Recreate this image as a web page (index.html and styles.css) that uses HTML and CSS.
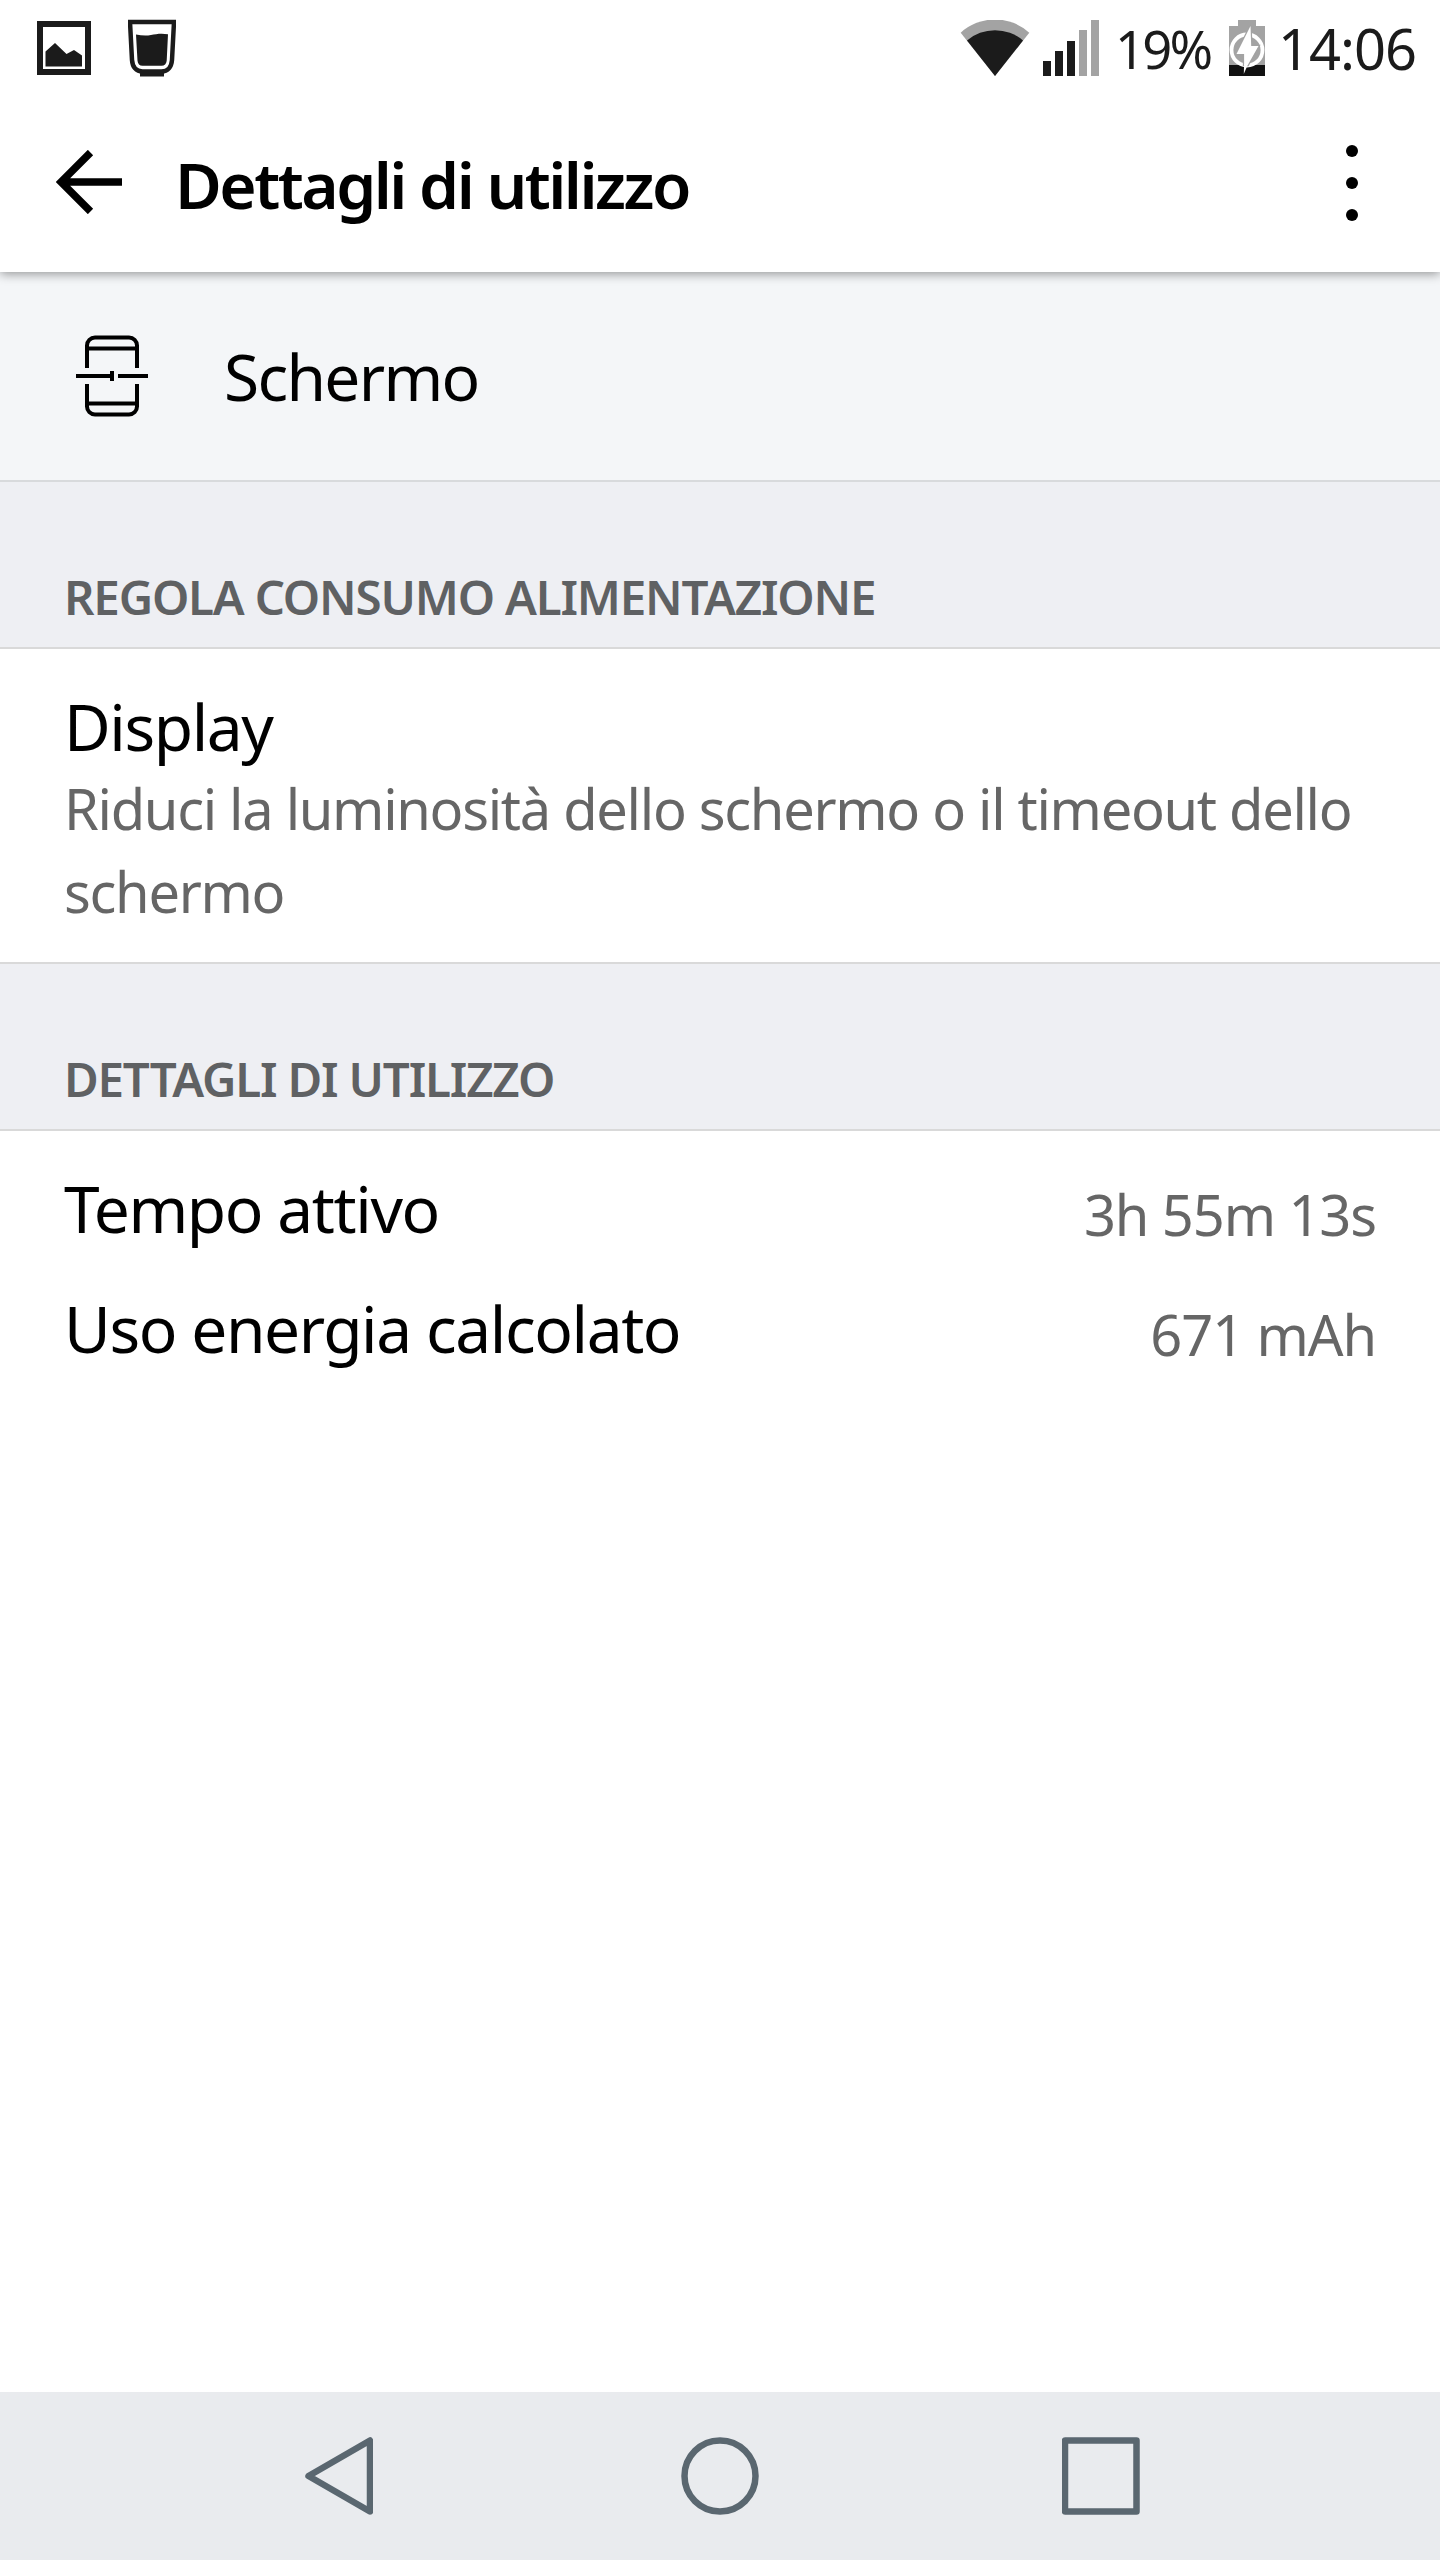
FILE: index.html
```
<!DOCTYPE html>
<html lang="it">
<head>
    <meta charset="UTF-8" />
    <meta name="viewport" content="width=device-width, initial-scale=1.0" />
    <title>Dettagli di utilizzo</title>
    <link rel="stylesheet" href="styles.css">
</head>
<body>
    <div class="status-bar">
        <div class="notifications">
            <svg width="54" height="54" viewBox="0 0 54 54">
                <path d="M3 3h48v48H3z" fill="none" stroke="#1b1b1b" stroke-width="6"/>
                <path d="M8.500 30.500l9.500-8.500 11.500 11 7.500-4 8 5.500v11h-36.500z" fill="#1b1b1b"/>
            </svg>
            <svg width="48" height="58" viewBox="0 0 48 58">
                <path d="M2 3h44l-2 38c-.5 7-4 11.500-10.500 11.500h-19C8 52.500 4.500 48 4 41z" fill="none" stroke="#1b1b1b" stroke-width="4.500"/>
                <path d="M12 53h24v4.500H12z" fill="#1b1b1b"/>
                <path d="M8 15.500c5 1 10 1.500 15 .5s10-2 17-.8l-1.300 26.500c-.3 3-2.200 5-5.200 5h-19c-3 0-4.700-2-5-5z" fill="#1b1b1b"/>
            </svg>
        </div>
        <div class="indicators">
            <svg class="wifi" width="70" height="56" viewBox="0 0 70 56">
                <path d="M.7 12.700a51 51 0 0 1 68.600 0L35 56z" fill="#a3a3a3"/>
                <path d="M7 20.500a43 43 0 0 1 56 0L35 56z" fill="#1b1b1b"/>
            </svg>
            <svg class="signal" width="56" height="56" viewBox="0 0 56 56">
                <path d="M0 41h8v15H0zM12 31h8v25h-8zM24 21h8v35h-8z" fill="#1b1b1b"/>
                <path d="M36 10h8v46h-8zM48 0h8v56h-8z" fill="#a3a3a3"/>
            </svg>
            <span class="percent">19%</span>
            <svg class="battery" width="36" height="56" viewBox="0 0 36 56">
                <path d="M9 0h18v6h9v39H0V6h9z" fill="#a3a3a3"/>
                <path d="M0 45h36v11H0z" fill="#111"/>
                <circle cx="18" cy="30" r="15.500" fill="none" stroke="#fff" stroke-width="3.800"/>
                <path d="M21.500 6L7.500 34h7.600v11h3.700L29.500 26h-7.300z" fill="#fff" stroke="#a3a3a3" stroke-width="2.500" paint-order="stroke"/>
                <path d="M15.100 44h4l-4.300 10z" fill="#fff"/>
            </svg>
            <span class="clock">14:06</span>
        </div>
    </div>

    <header class="app-bar">
        <svg class="back" width="66" height="64" viewBox="0 0 66 64">
            <path d="M34.500 2.500L5 32l29.500 29.500M5 32h61" fill="none" stroke="#000" stroke-width="7.500"/>
        </svg>
        <h1>Dettagli di utilizzo</h1>
        <svg class="more" width="12" height="76" viewBox="0 0 12 76">
            <circle cx="6" cy="6" r="6"/>
            <circle cx="6" cy="38" r="6"/>
            <circle cx="6" cy="70" r="6"/>
        </svg>
    </header>

    <main>
        <div class="component">
            <svg width="72" height="82" viewBox="0 0 72 82">
                <g fill="none" stroke="#000" stroke-width="4">
                    <path d="M11 33V10.500a8 8 0 0 1 8-8h34a8 8 0 0 1 8 8V33M11 13.500h50"/>
                    <path d="M11 49v22.500a8 8 0 0 0 8 8h34a8 8 0 0 0 8-8V49M11 68.500h50"/>
                    <path d="M0 41h36M42 41h30M36 36v10"/>
                </g>
            </svg>
            <span>Schermo</span>
        </div>

        <h2>REGOLA CONSUMO ALIMENTAZIONE</h2>
        <div class="setting">
            <div class="label">Display</div>
            <p>Riduci la luminosità dello schermo o il timeout dello schermo</p>
        </div>

        <h2>DETTAGLI DI UTILIZZO</h2>
        <div class="stats">
            <div class="stat">
                <span class="label">Tempo attivo</span>
                <span class="value">3h 55m 13s</span>
            </div>
            <div class="stat">
                <span class="label">Uso energia calcolato</span>
                <span class="value">671 mAh</span>
            </div>
        </div>
    </main>

    <nav class="nav-bar">
        <svg width="68" height="78" viewBox="0 0 68 78">
            <path d="M65 3.500v71L3.500 39z"/>
        </svg>
        <svg width="78" height="78" viewBox="0 0 78 78">
            <circle cx="39" cy="39" r="35.500"/>
        </svg>
        <svg width="78" height="78" viewBox="0 0 78 78">
            <path d="M3 3.500h71.500v71H3z"/>
        </svg>
    </nav>
</body>
</html>
```
FILE: styles.css
```
* {
    box-sizing: border-box;
}
body {
    margin: 0;
    width: 1440px;
    height: 2560px;
    display: flex;
    flex-direction: column;
    background: #fff;
    color: #000;
    font-family: "Noto Sans", "Open Sans", sans-serif;
}
svg {
    display: block;
    flex: none;
}
h1, h2, p {
    margin: 0;
}

/* status bar */
.status-bar {
    height: 96px;
    padding: 0 24px 0 37px;
    display: flex;
    align-items: center;
    justify-content: space-between;
    color: #1b1b1b;
}
.notifications, .indicators {
    display: flex;
    align-items: center;
}
.notifications {
    gap: 37px;
}
.signal {
    margin: 0 16px 0 13px;
}
.percent {
    width: 97px;
    font-size: 52.5px;
    letter-spacing: -2.8px;
    white-space: nowrap;
}
.battery {
    margin: 0 13px 0 17px;
}
.clock {
    width: 138px;
    font-size: 56px;
    letter-spacing: -1px;
    white-space: nowrap;
}

/* app bar */
.app-bar {
    position: relative;
    height: 176px;
    padding: 0 82px 0 56px;
    display: flex;
    align-items: center;
    background: #fff;
    box-shadow: 0 2px 10px rgba(0, 0, 0, 0.4);
    clip-path: inset(0 0 -14px 0);
}
.back {
    margin-bottom: 4px;
}
.more {
    margin-bottom: 2px;
}
.app-bar h1 {
    flex: 1;
    margin-left: 53px;
    font-size: 64px;
    font-weight: 600;
    letter-spacing: -2.5px;
}

/* content */
main {
    flex: 1;
}
.component {
    height: 210px;
    padding-left: 76px;
    display: flex;
    align-items: center;
    gap: 76px;
    background: #f4f6f8;
    border-bottom: 2px solid #d8dadc;
    font-size: 64px;
    letter-spacing: -1.7px;
}
h2 {
    height: 167px;
    padding: 83px 64px 0;
    background: #eeeff3;
    border-bottom: 2px solid #d9d9d9;
    color: #5f6163;
    font-size: 47.5px;
    line-height: 64px;
    font-weight: 600;
    letter-spacing: -1.2px;
}
.label {
    font-size: 64px;
    line-height: 80px;
    letter-spacing: -1.4px;
}
.setting {
    height: 315px;
    padding: 38px 64px 0;
    border-bottom: 2px solid #d9d9d9;
}
.setting p {
    color: #666;
    font-size: 56px;
    line-height: 82.7px;
    letter-spacing: -1.3px;
}
.stats {
    padding: 18px 64px 0;
}
.stat {
    height: 120px;
    display: flex;
    align-items: center;
    justify-content: space-between;
}
.value {
    padding-top: 9px;
    color: #666;
    font-size: 56px;
    letter-spacing: -1.1px;
}

/* navigation bar */
.nav-bar {
    height: 168px;
    padding: 0 300px 0 305px;
    display: flex;
    align-items: center;
    justify-content: space-between;
    background: #e9ebee;
}
.nav-bar svg:nth-child(2) {
    margin-left: 4px;
}
.nav-bar path, .nav-bar circle {
    fill: none;
    stroke: #5a6770;
    stroke-width: 6.5;
    stroke-linejoin: round;
}
```
